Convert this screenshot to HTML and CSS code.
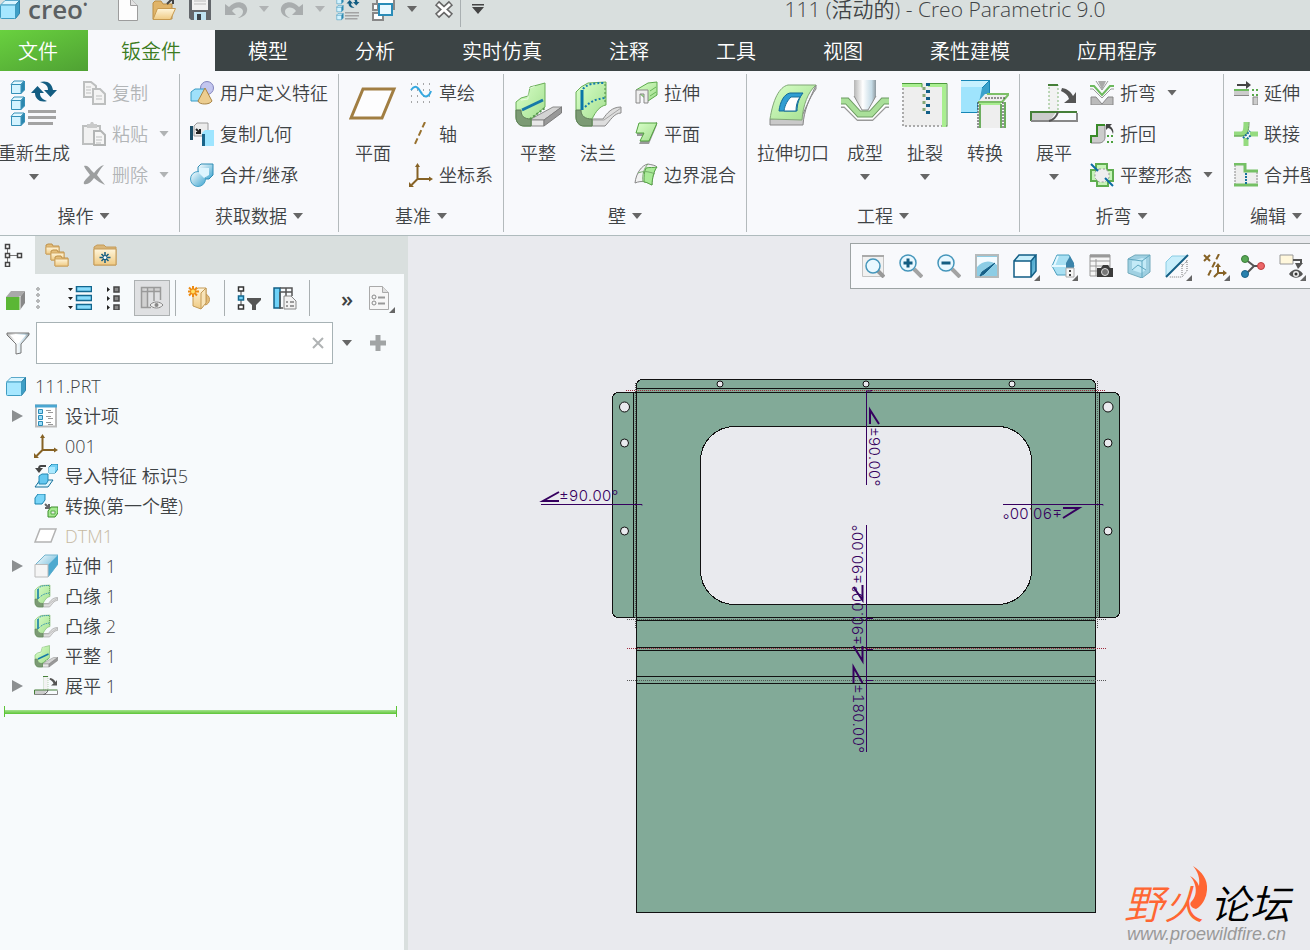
FILE: index.html
```html
<!DOCTYPE html>
<html lang="zh-CN">
<head>
    <meta charset="UTF-8">
    <meta name="viewport" content="width=device-width, initial-scale=1.0">
    <title>111 (活动的) - Creo Parametric 9.0</title>
    <link rel="stylesheet" href="styles.css">
</head>
<body>

    <!-- icon sprite -->
    <svg class="sprite" aria-hidden="true">
        <defs>
            <linearGradient id="blueGrad" x1="0" y1="0" x2="1" y2="1"><stop offset="0" stop-color="#ffffff"/><stop offset="1" stop-color="#3da5d0"/></linearGradient>
            <linearGradient id="greenGrad" x1="0" y1="0" x2="1" y2="1"><stop offset="0" stop-color="#d9ffc9"/><stop offset="1" stop-color="#a0dd8c"/></linearGradient>
            <linearGradient id="grayGrad" x1="0" y1="0" x2="1" y2="0"><stop offset="0" stop-color="#b5b5b5"/><stop offset=".4" stop-color="#ffffff"/><stop offset=".8" stop-color="#c5dbe6"/><stop offset="1" stop-color="#8c979d"/></linearGradient>
            <linearGradient id="foldGrad" x1="0" y1="0" x2="0" y2="1"><stop offset="0" stop-color="#fff6dc"/><stop offset="1" stop-color="#efca83"/></linearGradient>
        </defs>
        <symbol id="cube" viewBox="0 0 24 24">
            <path d="M2.500 8 7 3.500h14.500L17.500 8z" fill="#d9f5ff" stroke="#5ba9ca"/>
            <path d="M17.500 8l4-4.500v13l-4 5z" fill="#3f9fc6" stroke="#2c82a8"/>
            <rect x="2.500" y="8" width="15" height="13.500" rx="1" fill="#a6e7ff" stroke="#3f9cc2"/>
        </symbol>
        <symbol id="new" viewBox="0 0 24 24">
            <path d="M2.500 1.500h12l7 7v15h-19z" fill="#fdfdfd" stroke="#9c9c9c"/>
            <path d="M14.500 1.500v7h7" fill="#e2e2e2" stroke="#9c9c9c"/>
        </symbol>
        <symbol id="open" viewBox="0 0 24 24">
            <path d="M1 22V6l2-2h6l2 3h9v15z" fill="#e0b469" stroke="#b98d45"/>
            <path d="M5.500 11.500h18l-5 11H1z" fill="url(#foldGrad)" stroke="#c79a50"/>
            <path d="M15 7l5-5m-4 0h5v5" fill="none" stroke="#444" stroke-width="2"/>
        </symbol>
        <symbol id="save" viewBox="0 0 24 24">
            <path d="M1 1h22v22H3l-2-2z" fill="#63676b"/>
            <path d="M4 1h16v12H4z" fill="#f2f2f2"/>
            <path d="M6 4h12M6 7h12" stroke="#bbb"/>
            <path d="M6 15h12v8H6z" fill="#bfe3f2"/><path d="M9 17h4v6H9z" fill="#3b4349"/>
        </symbol>
        <symbol id="undo" viewBox="0 0 24 24">
            <path d="M1 7v11h11l-4-4c4-5 10-4 11 0 0 4-2 5-5 7 7-1 10-6 9-10C21 4 11 3 5 10z" fill="#a9adae"/>
        </symbol>
        <symbol id="redo" viewBox="0 0 24 24">
            <path d="M23 7v11H12l4-4C12 9 6 10 5 14c0 4 2 5 5 7-7-1-10-6-9-10C3 4 13 3 19 10z" fill="#a9adae"/>
        </symbol>
        <symbol id="regen" viewBox="0 0 48 48">
            <g stroke="#3590b8">
                <g id="rc"><path d="M1 4.500 4 1h10l-3 3.500z" fill="#e2f8ff"/><path d="M11 4.500 14.500 1v9L11 13.500z" fill="#2c86ad"/><path d="M1.500 4.500h9.500v9H1.500z" fill="#d3f3ff"/></g>
                <use href="#rc" y="16"/><use href="#rc" y="32"/>
            </g>
            <g fill="#135d82">
                <path d="M30 2c7-2 12 1 13 8h4l-6.500 7-6.500-7h4c0-4-2-6-8-8z"/>
                <path d="M37 21c-7 2-12-2-12-8h-4l6.500-7 6.500 7h-4c0 4 2 6 7 8z"/>
            </g>
            <path d="M18 31.500h28M18 37.500h28M18 43.500h25" stroke="#a3a3a3" stroke-width="3"/>
        </symbol>
        <symbol id="windows" viewBox="0 0 24 24">
            <path d="M5 1h17v11H5z" fill="#fff" stroke="#888" stroke-width="2"/>
            <path d="M1 16h10v7H1zM1 7h5v6H1z" fill="#fff" stroke="#888" stroke-width="2"/>
            <path d="M7 7h13v11H7z" fill="#e9f8ff" stroke="#2a8cb8" stroke-width="2"/>
        </symbol>
        <symbol id="closewin" viewBox="0 0 24 24">
            <path d="M6 6l14 13M20 6 6 19" stroke="#666" stroke-width="6"/>
            <path d="M7 7l12 11M19 7 7 18" stroke="#fff" stroke-width="3"/>
        </symbol>
        <symbol id="copy" viewBox="0 0 24 24">
            <g fill="#f4f4f4" stroke="#bdbfbf" stroke-width="2"><path d="M2 1h7l5 4v11H2z"/><path d="M11 8h7l5 5v10H11z"/></g>
            <path d="M4 6h5M4 9h5M4 12h5M14 15h6M14 18h6" stroke="#bdbfbf"/>
        </symbol>
        <symbol id="paste" viewBox="0 0 24 24">
            <path d="M1 4h17v18H1z" fill="#f1f1f1" stroke="#bdbfbf" stroke-width="2"/><path d="M5 2h3l1-2h2l1 2h3v4H5z" fill="#c9caca"/>
            <path d="M12 9h7l4 4v10H12z" fill="#f6f6f6" stroke="#b3b5b5" stroke-width="2"/><path d="M14 15h6M14 18h6M14 21h5" stroke="#bdbfbf"/>
        </symbol>
        <symbol id="del" viewBox="0 0 24 24">
            <path d="M2 3c3-1 5 1 7 4l3 3c3-4 6-7 10-8-3 3-5 6-7 10 3 4 6 7 8 10-4-2-8-4-11-7-3 4-6 7-10 6-1-2 1-4 6-9C6 9 3 6 2 3z" fill="#9d9fa0"/>
        </symbol>
        <symbol id="udf" viewBox="0 0 24 24">
            <circle cx="17" cy="7" r="6.500" fill="#c3c6ef" stroke="#8285bd"/>
            <path d="M1 11l4-3h10v9l-3 3H1z" fill="#9fe1fb" stroke="#3b9cc4"/>
            <path d="M15 7l7 13c-2 4-13 4-14 0z" fill="#eccd90" stroke="#a98443"/>
        </symbol>
        <symbol id="copygeo" viewBox="0 0 24 24">
            <path d="M4 4l3-3h11v13H4z" fill="#ececec" stroke="#9c9c9c"/><path d="M0 4h3v14H0z" fill="#1c4f69"/>
            <path d="M6 7l4 4m0-4v4H6" stroke="#222" stroke-width="2" fill="none"/>
            <path d="M12 11l3-3h9v16H12z" fill="#9ee5ff"/><path d="M12 12h3v12h-3z" fill="#196489"/>
        </symbol>
        <symbol id="merge" viewBox="0 0 24 24">
            <path d="M8 4l3-3h12v11l-4 4H8z" fill="url(#blueGrad)" stroke="#2e8cb4"/>
            <circle cx="8" cy="16" r="7.500" fill="url(#blueGrad)" stroke="#4ba3c8"/><path d="M9 5h10v7l-5 3-5-5z" fill="#def5fe"/>
        </symbol>
        <symbol id="plane" viewBox="0 0 48 48">
            <path d="M14 9h31L33 38H2z" fill="#fff" fill-opacity=".7" stroke="#a17e42" stroke-width="3"/>
        </symbol>
        <symbol id="sketch" viewBox="0 0 24 24">
            <path d="M2 3h22M2 9h22M2 15h22M2 21h22" stroke="#555" stroke-width="1" stroke-dasharray="1 5"/>
            <path d="M2 9c5-7 8-1 11 4 3 4 7 3 9-3" fill="none" stroke="#35a7df" stroke-width="2"/>
        </symbol>
        <symbol id="axis" viewBox="0 0 24 24"><path d="M16 0 5 24" stroke="#98712e" stroke-width="2" stroke-dasharray="6 3"/></symbol>
        <symbol id="csys" viewBox="0 0 24 24">
            <path d="M8.500 3v13H21M8.500 16l-6 6" fill="none" stroke="#866225" stroke-width="2"/>
            <path d="M8.500 0l2.500 4H6zM24 16l-4-2.500v5zM0 24v-5l5 5z" fill="#866225"/>
        </symbol>
        <symbol id="flat" viewBox="0 0 48 48">
            <path d="M17 39 39 27h9L30 40H17z" fill="#d3d3d3" stroke="#8a8a8a"/><path d="M17 40h13v6H17z" fill="#e8e8e8" stroke="#8a8a8a"/><path d="M30 40l17.500-13v6L30 46z" fill="#999" stroke="#7d7d7d"/>
            <path d="M2 22l5-4 7-2 2-9 15-4v24L17 39v7h-7c-5 0-8-4-8-9z" fill="url(#greenGrad)" stroke="#6aae58"/>
            <path d="M7 20l7-1V9l7-3" fill="none" stroke="#fff" stroke-opacity=".6"/>
            <path d="M2 30h5c0 6 3 9 10 9v7h-7c-5 0-8-4-8-9z" fill="#7c9b74" stroke="#5f7d58"/>
            <path d="M8 30l21-10" stroke="#1679a8" stroke-width="3"/><path d="M16 39l15-11" stroke="#569350" stroke-width="2" stroke-dasharray="2 2"/>
        </symbol>
        <symbol id="flange" viewBox="0 0 48 48">
            <path d="M18 39h11c4-6 9-12 18-12v6c-7 0-11 8-16 13H18z" fill="#dedede" stroke="#8a8a8a"/><path d="M18 40h12l17-12" fill="none" stroke="#a5a5a5"/>
            <path d="M2 12l5-5 7-4 18-1v23c-6 1-10 6-14 14v7h-8c-5 0-8-4-8-9z" fill="url(#greenGrad)" stroke="#6aae58"/>
            <path d="M2 30h5c0 6 4 9 11 9v7h-8c-5 0-8-4-8-9z" fill="#7c9b74" stroke="#5f7d58"/>
            <path d="M8 10v20" stroke="#0b76a8" stroke-width="3"/>
            <path d="M9 9c4-5 10-6 22-6M11 27c5-5 10-8 20-9" fill="none" stroke="#147cae" stroke-width="2" stroke-dasharray="2 2"/>
            <path d="M31 4v20" stroke="#4c8d42" stroke-dasharray="2 2"/>
        </symbol>
        <symbol id="ext" viewBox="0 0 24 24">
            <path d="M2 9 14 2l9-1v13l-9 6z" fill="url(#greenGrad)" stroke="#5aa94a"/><path d="M2 9h12v13h-4v-9H6v9H2z" fill="#eee" stroke="#888"/><path d="M16 10l6-4M16 15l6-4" stroke="#69b65a"/>
        </symbol>
        <symbol id="planar" viewBox="0 0 24 24">
            <path d="M3 11v3h6l-4 8h10l8-19v-3z" fill="#9a9a9a"/>
            <path d="M5 1h18l-8 18H6l4-8H2z" fill="url(#greenGrad)" stroke="#51a23e"/>
        </symbol>
        <symbol id="blend" viewBox="0 0 24 24">
            <path d="M1 20C2 10 8 2 14 1c4 1 7 1 9 3-3 3-5 12-5 18-5-3-10-5-17-2z" fill="#f1f1f1" stroke="#888"/>
            <path d="M12 5c4-1 7 0 11-1-3 3-5 12-5 18-3-1-5-3-8-3 0-6 0-10 2-14z" fill="#a9ea97" stroke="#55a444"/>
            <path d="M4 10c5-2 10-2 17 1M9 19C8 12 10 5 14 1" fill="none" stroke="#74ab69"/>
        </symbol>
        <symbol id="cut" viewBox="0 0 48 48">
            <path d="M1 39v6h33c1-14 6-27 13-36V5L33 36z" fill="#c9c9c9" stroke="#888"/>
            <path d="M1 39C4 20 10 7 19 5h28c-8 7-13 20-14 35z" fill="url(#greenGrad)" stroke="#81a777"/>
            <path d="M10 31c1-9 5-17 11-18h13c-4 5-6 11-6 18z" fill="#309ed2" stroke="#126b98"/><path d="M15 31c1-7 4-11 7-14h9c-3 4-4 9-4 14z" fill="#fff" stroke="#1a709a"/>
        </symbol>
        <symbol id="form" viewBox="0 0 48 48">
            <path d="M13 0h22v16L27 30h-6l-8-14z" fill="url(#grayGrad)"/><path d="M13 16l8 14h6l8-14" fill="none" stroke="#8a8a8a"/>
            <path d="M0 26h4l13 13h14l13-13h4" fill="none" stroke="#999" stroke-width="4"/><path d="M0 25h4l13 13h14l13-13h4" fill="none" stroke="#fff" stroke-width="3"/>
            <path d="M0 21h6l12 13h12l12-13h6" fill="none" stroke="#6d9b62" stroke-width="7"/><path d="M0 21h6l12 13h12l12-13h6" fill="none" stroke="#a9df99" stroke-width="5"/>
        </symbol>
        <symbol id="rip" viewBox="0 0 48 48">
            <path d="M2 3h44v43H2z" fill="#eee"/><path d="M2 4v42h44" fill="none" stroke="#aaa" stroke-width="2" stroke-dasharray="2 2"/>
            <path d="M1 5h20M27 5h16v42" fill="none" stroke="#a9ee90" stroke-width="4"/><path d="M1 3.500h20v4M27 3.500h19v43" fill="none" stroke="#4d9a3d"/>
            <path d="M27 3v32" stroke="#125f87" stroke-width="4" stroke-dasharray="3 4"/><path d="M23 7v28" stroke="#85a877" stroke-width="3" stroke-dasharray="3 4"/>
        </symbol>
        <symbol id="convert" viewBox="0 0 48 48">
            <path d="M0 0h29l-8 8H0z" fill="#c7f1ff"/><path d="M0 7h21v26H0z" fill="#9fe4fd"/><path d="M21 8l8-8v15L16 23v9z" fill="#3aa1cb"/><path d="M0 .500h28.500M28.500 0v14M0 32.500h16M21 8l8-8" stroke="#1686b6" fill="none"/>
            <path d="M17 22l7-8h24l-8 8v26H17z" fill="#eee"/><path d="M17 22h24l7-8H26" fill="none" stroke="#7cbf68" stroke-width="2"/><path d="M18 24h22" stroke="#a9ee90" stroke-width="2"/>
            <path d="M19 24v24M40 24v24M44 22v26" stroke="#6eae60" stroke-width="2"/><path d="M17 22v26M42 22v26M24 18h20" stroke="#333" stroke-width="1" stroke-dasharray="2 1"/>
        </symbol>
        <symbol id="unbend" viewBox="0 0 48 48">
            <path d="M19 5h9v27h-9z" fill="#f2f2f2" stroke="#81b574" stroke-dasharray="2 2"/><path d="M18 5h10" stroke="#457f38" stroke-width="2"/>
            <path d="M1 32h25l-6 9H1z" fill="#ccc"/><path d="M1 41V32h46" fill="none" stroke="#457f38" stroke-width="2"/><path d="M1 41h46v-8" fill="none" stroke="#888" stroke-width="2"/>
            <path d="M28 32c-2 6-5 8-9 9" fill="none" stroke="#555" stroke-width="2"/>
            <path d="M32 8c6 1 9 4 11 8l3-4v11H34l5-4c-1-4-4-6-8-8z" fill="#555"/>
        </symbol>
        <symbol id="bend" viewBox="0 0 24 24">
            <path d="M8 0h8l-4 9z" fill="#a9a9a9"/><path d="M1 16h5l6 7 6-7h5v8H1z" fill="#bbb" stroke="#888"/>
            <path d="M0 5h4l8 9 8-9h4" fill="none" stroke="#6db95e" stroke-width="2"/><path d="M0 8h3l9 9 9-9h3M6 0l6 9 6-9" fill="none" stroke="#999"/>
        </symbol>
        <symbol id="bendback" viewBox="0 0 24 24">
            <path d="M1 14h6V3h8v12c0 4-3 6-6 6H1z" fill="#ccc" stroke="#888"/><path d="M1 21v-7h6V3h8" fill="none" stroke="#398a29" stroke-width="2"/>
            <path d="M17 14h7M17 20h7" stroke="#4da23e" stroke-width="2" stroke-dasharray="2 2"/><path d="M16 2l6 0-2 2c3 2 4 5 3 8-1-4-3-6-5-6l-2 2z" fill="#444"/>
        </symbol>
        <symbol id="flatpat" viewBox="0 0 24 24">
            <path d="M6 1h11v6h6v11h-5v5H7v-5H1V7h5z" fill="#c7f4b9" stroke="#5fae50" stroke-width="2"/>
            <path d="M9 6h7l3 4v5l-4 4H9l-4-4V9z" fill="#eee" stroke="#999" stroke-dasharray="2 2"/>
            <path d="M1 1l7 7M15 15l8 8" stroke="#0d6da3" stroke-width="2"/>
        </symbol>
        <symbol id="extend" viewBox="0 0 24 24">
            <path d="M3 4h12" stroke="#444" stroke-width="2"/><path d="M12 0l5 4-5 4z" fill="#444"/>
            <path d="M0 10h15v4H0z" fill="#ccc"/><path d="M0 9h15" stroke="#6db95e" stroke-width="2"/><path d="M0 14.500h15" stroke="#888"/>
            <path d="M18 9h6M18 14h6" stroke="#58a84a" stroke-width="2" stroke-dasharray="2 2"/><path d="M19 16h5v8h-5z" fill="#ccc" stroke="#888"/>
        </symbol>
        <symbol id="join" viewBox="0 0 24 24">
            <path d="M0 12h7c4 0 5-3 5-12M16 12h8M12 16v8" fill="none" stroke="#95db80" stroke-width="5"/>
            <path d="M0 14h7c6 0 8-4 8-14" fill="none" stroke="#5d9c4d"/><path d="M9 16l7-7M13 17l4-4" stroke="#16719d" stroke-width="2" stroke-dasharray="2 1"/>
        </symbol>
        <symbol id="mergewall" viewBox="0 0 24 24">
            <path d="M1 1h10v7h13v15H1z" fill="#eee"/><path d="M1 2v20M23 9v14" stroke="#888" stroke-dasharray="2 1"/>
            <path d="M0 1h11v7h13M0 22h24" fill="none" stroke="#75c065" stroke-width="3"/><path d="M12 10v11" stroke="#16719d" stroke-width="2" stroke-dasharray="2 1"/>
        </symbol>
        <symbol id="treetab" viewBox="0 0 24 24">
            <path d="M4.500 3v18M4 12.500h13" stroke="#777"/><path d="M2.500 1.500h4v4h-4zM2.500 10.500h4v4h-4zM2.500 19.500h4v4h-4zM14.500 10.500h4v4h-4z" fill="#fff" stroke="#444" stroke-width="1.500"/>
        </symbol>
        <symbol id="folders" viewBox="0 0 24 24">
            <g id="fold1"><path d="M1 11V2l2-1h4l1 2h6v8z" fill="#e3bd79" stroke="#be914a"/><path d="M1 4h13v7H1z" fill="url(#foldGrad)" stroke="#d0a560"/></g>
            <use href="#fold1" x="5" y="6"/><use href="#fold1" x="9" y="12"/>
        </symbol>
        <symbol id="favs" viewBox="0 0 24 24">
            <path d="M1 22V4l3-2h7l2 2h10v18z" fill="#dab679" stroke="#c59b58"/><path d="M1 6h22v16H1z" fill="url(#foldGrad)" stroke="#c59b58"/>
            <path d="M12 9v11M6.500 14.500h11M8.500 11l7 7M15.500 11l-7 7" stroke="#155e83" stroke-width="1.500"/><circle cx="12" cy="14.500" r="1.500" fill="#fff"/>
        </symbol>
        <symbol id="greencube" viewBox="0 0 24 24">
            <path d="M3 11l5-6h14l-5 6z" fill="#a9a9a9"/><path d="M17 11l5-6v12l-5 7z" fill="#888"/><path d="M3 11h14v13H3z" fill="#5bb735"/><path d="M17 10v14" stroke="#eee"/>
        </symbol>
        <symbol id="levels" viewBox="0 0 24 24">
            <path d="M0 2h5L2.500 5zM0 11h5l-2.500 3zM0 20h5l-2.500 3z" fill="#222"/>
            <path d="M8.500.500h15v5h-15zM8.500 9.500h15v5h-15zM8.500 18.500h15v5h-15z" fill="#8adcfc" stroke="#12668e" stroke-width="1.500"/>
        </symbol>
        <symbol id="collapse" viewBox="0 0 24 24">
            <path d="M6 1v5l3-2.500zM6 10v5l3-2.500zM6 19v5l3-2.500z" fill="#222"/><path d="M13 1h5v5h-5zM13 10h5v5h-5zM13 19h5v5h-5z" fill="#888" stroke="#444" stroke-width="1.500"/>
        </symbol>
        <symbol id="cols" viewBox="0 0 24 24">
            <path d="M1.500 1.500h19v4h-19zM1.500 6v15.500h6V2M14 2v13M20.500 6v8M8 21.500h3" fill="#d1d1d1" stroke="#9a9a9a" stroke-width="1.500"/>
            <path d="M10 19c3-4 10-4 13 0-3 4-10 4-13 0z" fill="#ececec" stroke="#888"/><circle cx="16.500" cy="19" r="2" fill="#888"/>
        </symbol>
        <symbol id="part" viewBox="0 0 24 24">
            <path d="M17 8c6 1 6 10 0 11z" fill="#e4bd7b" stroke="#c39a57"/>
            <path d="M5 5l5-3h8v14l-5 7-8-3z" fill="url(#foldGrad)" stroke="#c39a57"/><path d="M13 7l5-5v15l-5 6z" fill="#f8e4b8" stroke="#c39a57"/>
            <path d="M5 0v11M0 5.500h11M1 1.500l8 8M9 1.500l-8 8" stroke="#ed8b13" stroke-width="2"/><circle cx="5" cy="5.500" r="2" fill="#ffe064"/>
        </symbol>
        <symbol id="treefilter" viewBox="0 0 24 24">
            <path d="M4 4v16" stroke="#444"/><path d="M1.500 1h5v4h-5zM1.500 19h5v4h-5z" fill="#fff" stroke="#333" stroke-width="1.500"/><path d="M1.500 10h5v4h-5z" fill="#77d4fa" stroke="#14688f" stroke-width="1.500"/>
            <path d="M10 12h14v2l-5 5v5h-4v-5l-5-5z" fill="#555"/>
        </symbol>
        <symbol id="treecols" viewBox="0 0 24 24">
            <path d="M1 2h6v20H1z" fill="#6fd2f8" stroke="#125f85" stroke-width="1.500"/><path d="M7 2h12v4H7M13 2v8M7 6v16h3M19 6v4" fill="none" stroke="#555" stroke-width="1.500"/>
            <path d="M11 10h7l5 5v8H11z" fill="#f2f2f2" stroke="#888"/><path d="M13 16h2M17 16h4M13 20h2M17 20h4" stroke="#444"/>
        </symbol>
        <symbol id="settings" viewBox="0 0 24 24">
            <path d="M1.500.500h13l6 6v17h-19z" fill="#f7f7f7" stroke="#aaa"/><path d="M14.500.500v6h6" fill="#e0e0e0" stroke="#aaa"/>
            <circle cx="6" cy="11" r="2" fill="none" stroke="#888"/><circle cx="6" cy="17" r="2" fill="none" stroke="#888"/><path d="M10 11.500h7M10 17.500h7" stroke="#999" stroke-width="2"/>
        </symbol>
        <symbol id="funnel" viewBox="0 0 24 24">
            <path d="M1 2h22v2l-8 9v9l-5 1V13L1 4z" fill="url(#grayGrad)" stroke="#777"/><path d="M4 4h16l-7 8h-1z" fill="#fff"/>
        </symbol>
        <symbol id="items" viewBox="0 0 24 24">
            <path d="M2 1.500h20v21H2z" fill="#fff" stroke="#bbb" stroke-width="2"/><path d="M1 2h22" stroke="#4aa6d1" stroke-width="3"/>
            <path d="M4.500 5.500h4v4h-4zM4.500 11.500h4v4h-4zM4.500 17.500h4v4h-4z" fill="#9cdefa" stroke="#2a8cb8"/><path d="M12 6.500h5M14 8.500h5M12 12.500h5M14 14.500h5M12 18.500h5M14 20.500h5" stroke="#999"/>
        </symbol>
        <symbol id="import" viewBox="0 0 24 24">
            <path d="M15 3l3-3h6v5l-3 4h-6z" fill="#73d0f4" stroke="#1b83ae"/><path d="M15 3h6v6h-6z" fill="#aae9ff"/>
            <path d="M12 2H7c-1 0-2 1-2 3" fill="none" stroke="#444" stroke-width="2"/><path d="M1 4h8L5 9z" fill="#444"/>
            <path d="M1 23l5-7h13l-5 7z" fill="#dff5fc" stroke="#14709b"/><path d="M5 12l3-2h6v7l-2 3H5z" fill="#65c8f0" stroke="#2387b2"/>
        </symbol>
        <symbol id="conv" viewBox="0 0 24 24">
            <path d="M1 4l3-4h7v6l-3 4H1z" fill="#7ad5f8" stroke="#1b83ae"/><path d="M11 10l4 4m0-4v4h-4" fill="none" stroke="#666" stroke-width="2"/>
            <path d="M14 17l3-4h7v6l-3 4h-7z" fill="#a4e98f" stroke="#3c8e2c"/><path d="M17 17h4v3h-4z" fill="#eee" stroke="#58a84a"/>
        </symbol>
        <symbol id="dtm" viewBox="0 0 24 24"><path d="M6 5h16l-5 13H1z" fill="#fff" stroke="#b3b3b3" stroke-width="1.500"/></symbol>
        <symbol id="extr" viewBox="0 0 24 24">
            <path d="M1 11 11 1h13v9L14 23z" fill="url(#blueGrad)" stroke="#72b5cf"/><path d="M14 11 24 1v9L14 23z" fill="#4da9cf"/><path d="M1 10.500h13V23H1z" fill="#f5f5f5" stroke="#bbb"/>
        </symbol>
        <symbol id="refit" viewBox="0 0 24 24">
            <path d="M1.500 1.500h21v21h-21z" fill="#f1f1f1" stroke="#c3c3c3"/><path d="M1 2h22" stroke="#aaa" stroke-width="2"/>
            <path d="M17 17l6 6" stroke="#999" stroke-width="4"/><circle cx="12" cy="12" r="7" fill="#e9f8ff" stroke="#4596bb" stroke-width="1.500"/>
        </symbol>
        <symbol id="zin" viewBox="0 0 24 24">
            <path d="M15 15l8 8" stroke="#a3a3a3" stroke-width="4"/><circle cx="9" cy="9" r="8" fill="#e9f8ff" stroke="#4596bb" stroke-width="1.500"/><path d="M9 4.500v9M4.500 9h9" stroke="#135d82" stroke-width="3"/>
        </symbol>
        <symbol id="zout" viewBox="0 0 24 24">
            <path d="M15 15l8 8" stroke="#a3a3a3" stroke-width="4"/><circle cx="9" cy="9" r="8" fill="#e9f8ff" stroke="#4596bb" stroke-width="1.500"/><path d="M4.500 9h9" stroke="#135d82" stroke-width="3"/>
        </symbol>
        <symbol id="repaint" viewBox="0 0 24 24">
            <path d="M1 1h22v22H1z" fill="#8dcde5" stroke="#b5babb" stroke-width="2"/><path d="M2 3h20v8C15 5 7 7 2 13z" fill="#f3fbff"/><path d="M20 9 9 20l-4 2 2-4z" fill="#176087" stroke="#176087"/>
        </symbol>
        <symbol id="shaded" viewBox="0 0 24 24">
            <path d="M1 7l5-6h17l-5 6z" fill="#c1ecfb"/><path d="M18 7l5-6v16l-5 6z" fill="#55add1"/><path d="M1 7h17v16H1zM1 7l5-6h17l-5 6M23 1v16l-5 6" fill="#fff" fill-opacity=".1" stroke="#125e85" stroke-width="1.500"/><path d="M2 8h15v14H2z" fill="#fff"/>
        </symbol>
        <symbol id="saved" viewBox="0 0 24 24">
            <path d="M1 12 6 1h12l5 11-5 9H6z" fill="#a9e0f3" stroke="#4b9fbf"/><path d="M1 12h15M7 2l-4 10" fill="none" stroke="#e5f8ff" stroke-width="2"/><path d="M15 14V9l4-7 4 7v7h-8z" fill="#3c84aa"/>
            <path d="M15 14h8v9h-8z" fill="#f7f7f7" stroke="#aaa"/><path d="M19 16v2M19 20v2" stroke="#444" stroke-width="2"/>
        </symbol>
        <symbol id="viewmgr" viewBox="0 0 24 24">
            <path d="M1 1h20v21H1zM1 7h20M1 12h20M1 17h20M7 5v17" fill="#f5f5f5" stroke="#999"/><path d="M1 2h20" stroke="#999" stroke-width="3"/>
            <path d="M8 14h4l2-3h5l2 3h3v9H8z" fill="#3b3b3b"/><circle cx="16" cy="18" r="3.500" fill="#777" stroke="#ddd"/>
        </symbol>
        <symbol id="persp" viewBox="0 0 24 24">
            <path d="M1 5 8 1l15 0v17l-8 6L1 19z" fill="#9fd0e2" stroke="#73aabc"/><path d="M5 7l10-3 4 1v11l-5 3-9-3z" fill="#c3eaf7"/><path d="M1 5l14 2 8-6M15 7v17M5 16l6-5 8 5" fill="none" stroke="#5fa7c0"/>
        </symbol>
        <symbol id="section" viewBox="0 0 24 24">
            <path d="M1 8l6-6h15L1 22z" fill="#c8eefb" stroke="#8acce4"/><path d="M22 6v11l-5 6H4M17 10v12M17 12l5-5" fill="none" stroke="#777" stroke-dasharray="1 1"/><path d="M1 23 23 1" stroke="#155f85" stroke-width="2"/>
        </symbol>
        <symbol id="datums" viewBox="0 0 24 24">
            <path d="M1 1l6 6M7 1 1 7" stroke="#866225" stroke-width="2"/><path d="M16 0 4 24" stroke="#866225" stroke-width="2" stroke-dasharray="6 3"/>
            <path d="M15 12v7h7M15 19l-4 4" fill="none" stroke="#866225" stroke-width="2"/><path d="M15 9l3 4h-6zM24 19l-4-3v6z" fill="#866225"/>
        </symbol>
        <symbol id="annot" viewBox="0 0 24 24">
            <path d="M4 5l9 7h7M13 12l-8 8" fill="none" stroke="#555" stroke-width="2"/>
            <circle cx="4" cy="5" r="3.500" fill="#58a855" stroke="#3b7d3a"/><circle cx="20" cy="12" r="3.500" fill="#ed6668" stroke="#bd3e40"/><circle cx="4" cy="20" r="3.500" fill="#2981ae" stroke="#1a6188"/>
        </symbol>
        <symbol id="notes" viewBox="0 0 24 24">
            <path d="M1 1h13v9H1z" fill="#fff7dc" stroke="#999"/><path d="M14 6h8v4" fill="none" stroke="#555" stroke-width="2"/><path d="M16 9h8l-5 6z" fill="#555"/>
            <path d="M10 20c4-6 10-6 14 0-4 5-10 5-14 0z" fill="#555"/><circle cx="17" cy="20" r="3" fill="#eee"/><circle cx="17" cy="20" r="1.500" fill="#333"/>
        </symbol>
    </svg>

    <header class="titlebar">
        <svg class="icon logo-cube"><use href="#cube"/></svg>
        <span class="logo">creo<sup>•</sup></span>
        <div class="quick">
            <button aria-label="新建"><svg class="icon"><use href="#new"/></svg></button>
            <button aria-label="打开"><svg class="icon"><use href="#open"/></svg></button>
            <button aria-label="保存"><svg class="icon"><use href="#save"/></svg></button>
            <button aria-label="撤消"><svg class="icon"><use href="#undo"/></svg></button>
            <button class="caret off" aria-label="撤消列表"></button>
            <button aria-label="重做"><svg class="icon"><use href="#redo"/></svg></button>
            <button class="caret off" aria-label="重做列表"></button>
            <button aria-label="重新生成"><svg class="icon"><use href="#regen"/></svg></button>
            <button aria-label="窗口"><svg class="icon"><use href="#windows"/></svg></button>
            <button class="caret" aria-label="窗口列表"></button>
            <button class="close" aria-label="关闭"><svg class="icon"><use href="#closewin"/></svg></button>
            <span class="divider"></span>
            <button class="caret more" aria-label="自定义"></button>
        </div>
        <h1>111 (活动的) - Creo Parametric 9.0</h1>
    </header>

    <nav class="tabs">
        <button class="file">文件</button>
        <button class="active">钣金件</button>
        <button>模型</button>
        <button>分析</button>
        <button>实时仿真</button>
        <button>注释</button>
        <button>工具</button>
        <button>视图</button>
        <button>柔性建模</button>
        <button>应用程序</button>
    </nav>

    <section class="ribbon">
        <div class="group">
            <div class="tools">
                <button class="big"><svg><use href="#regen"/></svg>重新生成<i class="caret"></i></button>
                <div class="stack">
                    <button disabled><svg class="icon"><use href="#copy"/></svg>复制</button>
                    <button disabled><svg class="icon"><use href="#paste"/></svg>粘贴<i class="caret"></i></button>
                    <button disabled><svg class="icon"><use href="#del"/></svg>删除<i class="caret"></i></button>
                </div>
            </div>
            <button class="name">操作<i class="caret"></i></button>
        </div>
        <div class="group">
            <div class="tools">
                <div class="stack">
                    <button><svg class="icon"><use href="#udf"/></svg>用户定义特征</button>
                    <button><svg class="icon"><use href="#copygeo"/></svg>复制几何</button>
                    <button><svg class="icon"><use href="#merge"/></svg>合并/继承</button>
                </div>
            </div>
            <button class="name">获取数据<i class="caret"></i></button>
        </div>
        <div class="group">
            <div class="tools">
                <button class="big"><svg><use href="#plane"/></svg>平面</button>
                <div class="stack">
                    <button><svg class="icon"><use href="#sketch"/></svg>草绘</button>
                    <button><svg class="icon"><use href="#axis"/></svg>轴</button>
                    <button><svg class="icon"><use href="#csys"/></svg>坐标系</button>
                </div>
            </div>
            <button class="name">基准<i class="caret"></i></button>
        </div>
        <div class="group">
            <div class="tools">
                <button class="big"><svg><use href="#flat"/></svg>平整</button>
                <button class="big"><svg><use href="#flange"/></svg>法兰</button>
                <div class="stack">
                    <button><svg class="icon"><use href="#ext"/></svg>拉伸</button>
                    <button><svg class="icon"><use href="#planar"/></svg>平面</button>
                    <button><svg class="icon"><use href="#blend"/></svg>边界混合</button>
                </div>
            </div>
            <button class="name">壁<i class="caret"></i></button>
        </div>
        <div class="group">
            <div class="tools">
                <button class="big"><svg><use href="#cut"/></svg>拉伸切口</button>
                <button class="big"><svg><use href="#form"/></svg>成型<i class="caret"></i></button>
                <button class="big"><svg><use href="#rip"/></svg>扯裂<i class="caret"></i></button>
                <button class="big"><svg><use href="#convert"/></svg>转换</button>
            </div>
            <button class="name">工程<i class="caret"></i></button>
        </div>
        <div class="group">
            <div class="tools">
                <button class="big"><svg><use href="#unbend"/></svg>展平<i class="caret"></i></button>
                <div class="stack">
                    <button><svg class="icon"><use href="#bend"/></svg>折弯<i class="caret"></i></button>
                    <button><svg class="icon"><use href="#bendback"/></svg>折回</button>
                    <button><svg class="icon"><use href="#flatpat"/></svg>平整形态<i class="caret"></i></button>
                </div>
            </div>
            <button class="name">折弯<i class="caret"></i></button>
        </div>
        <div class="group">
            <div class="tools">
                <div class="stack">
                    <button><svg class="icon"><use href="#extend"/></svg>延伸</button>
                    <button><svg class="icon"><use href="#join"/></svg>联接</button>
                    <button><svg class="icon"><use href="#mergewall"/></svg>合并壁</button>
                </div>
            </div>
            <button class="name">编辑<i class="caret"></i></button>
        </div>
    </section>

    <main class="work">
        <aside class="panel">
            <div class="panel-tabs">
                <button class="active" aria-label="模型树"><svg class="icon"><use href="#treetab"/></svg></button>
                <button aria-label="文件夹浏览器"><svg class="icon"><use href="#folders"/></svg></button>
                <button aria-label="收藏夹"><svg class="icon"><use href="#favs"/></svg></button>
            </div>
            <div class="panel-tools">
                <button aria-label="模型"><svg class="icon"><use href="#greencube"/></svg></button>
                <span class="grip"></span>
                <button aria-label="层级"><svg class="icon"><use href="#levels"/></svg></button>
                <button aria-label="折叠"><svg class="icon"><use href="#collapse"/></svg></button>
                <button class="toggle" aria-label="显示列"><svg class="icon"><use href="#cols"/></svg></button>
                <span class="divider"></span>
                <button aria-label="新零件"><svg class="icon"><use href="#part"/></svg></button>
                <span class="divider"></span>
                <button aria-label="树过滤器"><svg class="icon"><use href="#treefilter"/></svg></button>
                <button class="columns" aria-label="树列"><svg class="icon"><use href="#treecols"/></svg></button>
                <span class="divider"></span>
                <button class="overflow">»</button>
                <button class="corner" aria-label="设置"><svg class="icon"><use href="#settings"/></svg></button>
            </div>
            <div class="filter">
                <svg class="icon"><use href="#funnel"/></svg>
                <div class="search">
                    <input type="text" aria-label="过滤">
                    <button class="clear" aria-label="清除"><svg class="icon-sm" viewBox="0 0 12 12"><path d="M1 1l10 10M11 1 1 11" stroke="#b0b3b4" stroke-width="2"/></svg></button>
                </div>
                <button class="caret" aria-label="过滤选项"></button>
                <button class="add" aria-label="添加"><svg class="icon-md" viewBox="0 0 18 18"><path d="M9 1v16M1 9h16" stroke="#a1a4a5" stroke-width="5"/></svg></button>
            </div>
            <ul class="tree">
                <li class="root"><svg class="icon"><use href="#cube"/></svg>111.PRT</li>
                <li><button class="expand" aria-label="展开"></button><svg class="icon"><use href="#items"/></svg>设计项</li>
                <li><svg class="icon"><use href="#csys"/></svg>001</li>
                <li><svg class="icon"><use href="#import"/></svg>导入特征 标识5</li>
                <li><svg class="icon"><use href="#conv"/></svg>转换(第一个壁)</li>
                <li class="hidden-item"><svg class="icon"><use href="#dtm"/></svg>DTM1</li>
                <li><button class="expand" aria-label="展开"></button><svg class="icon"><use href="#extr"/></svg>拉伸 1</li>
                <li><svg class="icon"><use href="#flange"/></svg>凸缘 1</li>
                <li><svg class="icon"><use href="#flange"/></svg>凸缘 2</li>
                <li><svg class="icon"><use href="#flat"/></svg>平整 1</li>
                <li><button class="expand" aria-label="展开"></button><svg class="icon"><use href="#unbend"/></svg>展平 1</li>
            </ul>
            <div class="insert-line"></div>
        </aside>

        <section class="canvas">
            <svg class="drawing" viewBox="408 236 902 714">
                <g class="sheet">
                    <path d="M636.500 392.500H619q-6.500 0-6.500 7v211q0 7 6.500 7h17.500zM1095.500 392.500H1113q6.500 0 6.500 7v211q0 7-6.500 7h-17.500z"/>
                    <path d="M636.500 912.500V386q0-6.500 7-6.500h445q7 0 7 6.500v526.500z"/>
                    <rect class="hole" x="700.500" y="426.500" width="331" height="178" rx="34"/>
                    <path d="M636 388.500h460M619 392.500h495M619 617.500h495M636 620.500h460M636 647.500h460M636 650.500h460M636 676.500h460M636 683.500h460M633.500 392v226M1099.500 392v226"/>
                </g>
                <g class="bendline">
                    <path class="red" d="M626 390.500h480M627 648.500h480"/>
                    <path d="M627 619.500h480M627 680.500h480M635.500 383v245M1097.500 381v247"/>
                </g>
                <g class="hole">
                    <circle cx="720" cy="384" r="3"/><circle cx="866" cy="384" r="3"/><circle cx="1012" cy="384" r="3"/>
                    <circle cx="624.500" cy="407" r="5"/><circle cx="624.500" cy="443" r="4"/><circle cx="624.500" cy="531" r="4"/>
                    <circle cx="1108" cy="407" r="5"/><circle cx="1108" cy="443" r="4"/><circle cx="1108" cy="531" r="4"/>
                </g>
                <g class="leader">
                    <path d="M866.500 485v-94h5v-1M866.500 525v227M541 504.500h101v1M1003 504.500h100v1M867 618.500h6M867 649.500h6M867 680.500h6"/>
                    <path class="angle" d="M559 492l-16 9h16M870 424v-14l9 14M1063 508h16l-16 10M862.500 585v15l-9-13M862.500 646v15l-9-15M853.500 683v-16l9 16"/>
                </g>
                <g class="dim">
                    <text transform="translate(559 501)">±90.00°</text>
                    <text transform="translate(869 427) rotate(90)">±90.00°</text>
                    <text transform="translate(1062 508) rotate(180)">±90.00°</text>
                    <text transform="translate(863 584) rotate(-90)">±90.00°</text>
                    <text transform="translate(863 645) rotate(-90)">±90.00°</text>
                    <text transform="translate(853 684) rotate(90)">±180.00°</text>
                </g>
            </svg>

            <div class="view-tools">
                <button aria-label="重新调整"><svg class="icon"><use href="#refit"/></svg></button>
                <button aria-label="放大"><svg class="icon"><use href="#zin"/></svg></button>
                <button aria-label="缩小"><svg class="icon"><use href="#zout"/></svg></button>
                <button aria-label="重画"><svg class="icon"><use href="#repaint"/></svg></button>
                <button class="corner" aria-label="显示样式"><svg class="icon"><use href="#shaded"/></svg></button>
                <button class="corner" aria-label="已保存方向"><svg class="icon"><use href="#saved"/></svg></button>
                <button aria-label="视图管理器"><svg class="icon"><use href="#viewmgr"/></svg></button>
                <button aria-label="透视图"><svg class="icon"><use href="#persp"/></svg></button>
                <button class="corner" aria-label="截面"><svg class="icon"><use href="#section"/></svg></button>
                <button class="corner" aria-label="基准显示"><svg class="icon"><use href="#datums"/></svg></button>
                <button aria-label="旋转中心"><svg class="icon"><use href="#annot"/></svg></button>
                <button class="corner" aria-label="注释显示"><svg class="icon"><use href="#notes"/></svg></button>
            </div>

            <div class="watermark">
                <div class="brand"><span>野火</span><span class="dark">论坛</span>
                    <svg class="flame" viewBox="0 0 20 44"><path d="M5 0c9 6 15 13 14 24-1 9-5 16-11 19-4-1-7-4-5-7 4-4 6-10 4-17C6 15 4 12 2 10c4 2 7 5 9 10C12 12 10 6 5 0z"/></svg>
                </div>
                <div class="site">www.proewildfire.cn</div>
            </div>
        </section>
    </main>

</body>
</html>
```

FILE: styles.css
```css
* {
    box-sizing: border-box;
}

body {
    margin: 0;
    min-height: 100vh;
    display: flex;
    flex-direction: column;
    overflow: hidden;
    background: #f8f9fc;
    color: #3f4345;
    font-family: "Open Sans", "Noto Sans CJK SC", sans-serif;
    font-size: 18px;
    font-weight: 350;
    line-height: 24px;
}

button {
    padding: 0;
    border: none;
    background: none;
    color: inherit;
    font: inherit;
    white-space: nowrap;
    cursor: pointer;
}

svg {
    display: block;
}

.sprite {
    position: absolute;
    width: 0;
    height: 0;
}

.icon {
    width: 24px;
    height: 24px;
    flex: none;
}

.icon-sm {
    width: 12px;
    height: 12px;
}

.icon-md {
    width: 18px;
    height: 18px;
}

.caret {
    width: 10px;
    height: 6px;
    flex: none;
    background: #666;
    clip-path: polygon(0 0, 100% 0, 50% 100%);
}

.caret.off,
button:disabled .caret {
    background: #b0b3b4;
}

.divider {
    width: 1px;
    flex: none;
    background: #a9afb1;
}

/* title bar */
.titlebar {
    display: flex;
    align-items: center;
    height: 30px;
    padding-bottom: 12px;
    background: #d9dfde;
    overflow: hidden;
}

.logo-cube {
    margin-left: -2px;
}

.logo {
    width: 94px;
    padding-left: 6px;
    font-size: 26px;
    font-weight: 600;
    line-height: 18px;
    color: #5b6062;
}

.logo sup {
    font-size: 12px;
    line-height: 0;
}

.quick {
    display: flex;
    align-items: center;
    gap: 11px;
}

.quick button + button:not(.caret) {
    margin-left: 1px;
}

.quick .caret + button:not(.caret) {
    margin-left: 0;
}

.quick .caret + button.close {
    margin-left: 3px;
}

.quick .divider {
    height: 36px;
    margin-left: -6px;
}

.caret.more {
    width: 12px;
    height: 10px;
    background: #444;
    clip-path: polygon(0 0, 100% 0, 100% 15%, 0 15%, 0 30%, 100% 30%, 50% 100%, 0 30%);
}

.titlebar h1 {
    flex: 1;
    margin: 0;
    padding-left: 96px;
    font-size: 21px;
    font-weight: 350;
    line-height: 18px;
    text-align: center;
    white-space: nowrap;
}

/* tabs */
.tabs {
    display: flex;
    height: 41px;
    background: #3c4445;
    color: #fff;
    font-size: 20px;
}

.tabs button {
    padding: 2px 34px 0 33px;
}

.tabs .file {
    padding: 2px 30px 0 18px;
    background: linear-gradient(160deg, #69d13f, #4fa133);
}

.tabs .active {
    background: #f8f9fc;
    color: #3c7c22;
}

/* ribbon */
.ribbon {
    display: flex;
    height: 165px;
    margin-left: -12px;
    border-bottom: 1px solid #afbbbd;
    overflow: hidden;
}

.group {
    display: flex;
    flex: none;
    flex-direction: column;
    padding: 0 10px;
    border-right: 1px solid #b4babc;
    margin: 3px 0;
}

.tools {
    display: flex;
    flex: none;
    gap: 12px;
    height: 122px;
    margin-top: -2px;
}

.big {
    display: flex;
    flex-direction: column;
    align-items: center;
    min-width: 48px;
    padding-top: 8px;
}

.big svg {
    width: 48px;
    height: 48px;
    flex: none;
    margin-bottom: 13px;
}

.big .caret {
    margin-top: 9px;
}

.stack button {
    display: flex;
    align-items: center;
    gap: 6px;
    height: 41px;
}

.stack .caret {
    margin-left: 5px;
}

.stack button:disabled {
    color: #b2b5b7;
}

.name {
    display: flex;
    align-items: center;
    justify-content: center;
    gap: 6px;
    height: 38px;
    padding-top: 6px;
}

/* model tree panel */
.work {
    display: flex;
    flex: 1;
}

.panel {
    flex: none;
    width: 408px;
    border-right: 4px solid #d9dfde;
    background: #f7fafc;
}

.panel-tabs {
    display: flex;
    height: 38px;
    gap: 24px;
    background: #d9dfde;
}

.panel-tabs .active {
    width: 35px;
    margin-right: -14px;
    padding-left: 3px;
    background: #f7fafc;
}

.panel-tools {
    display: flex;
    align-items: center;
    gap: 9px;
    height: 48px;
    padding: 0 12px 0 3px;
}

.panel-tools .divider {
    height: 36px;
    margin: 0 3px;
}

.grip {
    width: 4px;
    height: 24px;
    margin-right: 19px;
    background: radial-gradient(circle, #b6b8b9 50%, transparent 55%) 0 0 / 4px 6px;
}

.toggle {
    width: 36px;
    height: 36px;
    margin-right: -7px;
    padding-left: 5px;
    border: 1px solid #adb1b2;
    background: #dfe0e2;
}

.columns {
    margin-left: 3px;
}

.overflow {
    width: 24px;
    margin-left: auto;
    font-size: 22px;
    font-weight: 600;
}

.corner {
    position: relative;
}

.corner::after {
    content: "";
    position: absolute;
    right: -3px;
    bottom: -3px;
    border: 3px solid;
    border-color: transparent #666 #666 transparent;
}

.filter {
    display: flex;
    align-items: center;
    padding: 0 17px 0 6px;
}

.search {
    display: flex;
    align-items: center;
    flex: 1;
    height: 42px;
    margin: 0 9px 0 6px;
    padding-right: 8px;
    border: 1px solid #a7b2b5;
    background: #fff;
}

.search input {
    flex: 1;
    min-width: 0;
    border: none;
    outline: none;
    background: none;
    font: inherit;
}

.add {
    margin-left: 17px;
}

.tree {
    margin: 7px 0 0;
    padding: 0;
    list-style: none;
}

.tree li {
    display: flex;
    align-items: center;
    gap: 7px;
    height: 30px;
    padding-left: 34px;
}

.tree .root {
    padding-left: 4px;
}

.tree .hidden-item {
    color: #c6b9a2;
}

.expand {
    width: 11px;
    height: 12px;
    margin: 0 4px 0 -22px;
    background: #8c8f91;
    clip-path: polygon(0 0, 100% 50%, 0 100%);
}

.insert-line {
    height: 11px;
    margin: 5px 7px 0 4px;
    border: solid #5dc437;
    border-width: 0 1px;
    background: linear-gradient(#a5e38e, #5dc437) center / 100% 4px no-repeat;
}

/* graphics area */
.canvas {
    position: relative;
    flex: 1;
    background: #e9eaee;
    overflow: hidden;
}

.drawing {
    position: absolute;
    width: 100%;
    height: 100%;
}

.sheet {
    fill: #82aa98;
    stroke: #111;
    shape-rendering: crispEdges;
}

.sheet .hole,
.hole {
    fill: #e9eaee;
    stroke: #111;
}

.bendline {
    fill: none;
    stroke: #555;
    stroke-dasharray: 1 1;
    shape-rendering: crispEdges;
}

.bendline .red {
    stroke: #a02a3c;
}

.leader {
    fill: none;
    stroke: #36005f;
}

.leader .angle {
    stroke-width: 2;
}

.dim {
    fill: #36005f;
    font-family: Inter, sans-serif;
    font-size: 15px;
    font-variant-numeric: tabular-nums;
}

.view-tools {
    position: absolute;
    top: 7px;
    right: 0;
    display: flex;
    gap: 14px;
    padding: 10px 7px 10px 10px;
    border: 1px solid #9da3a4;
    border-right: none;
    background: #f8f9fc;
}

.watermark {
    position: absolute;
    right: 20px;
    bottom: 8px;
    text-align: right;
}

.brand {
    position: relative;
    display: flex;
    gap: 6px;
    color: #ff6633;
    font-size: 40px;
    font-style: italic;
    line-height: 44px;
}

.brand .dark {
    color: #000;
}

.flame {
    position: absolute;
    left: 64px;
    top: -16px;
    width: 20px;
    height: 44px;
    fill: #ff6633;
}

.site {
    margin-right: 4px;
    color: #999;
    font-family: "Liberation Sans", sans-serif;
    font-size: 18px;
    font-style: italic;
    line-height: 16px;
}
```
